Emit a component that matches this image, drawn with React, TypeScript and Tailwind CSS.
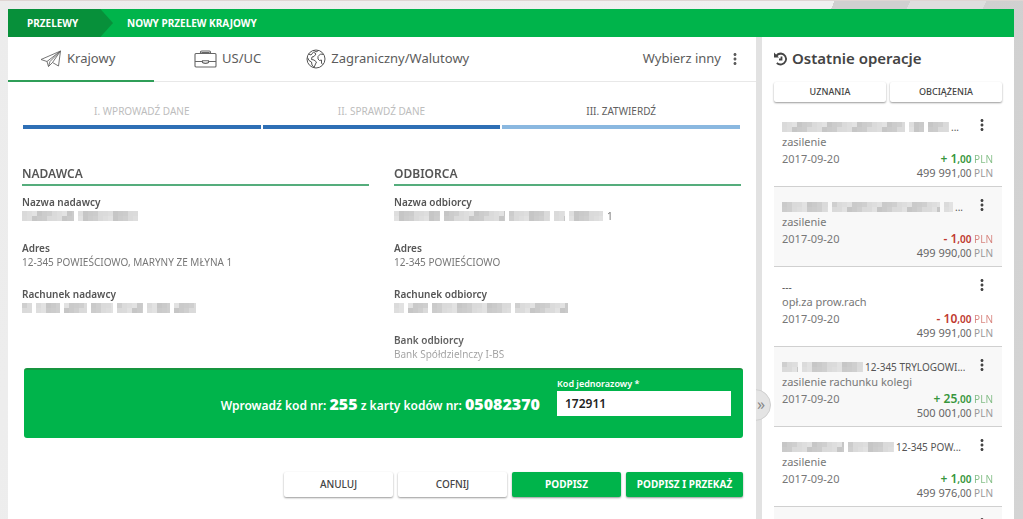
import React from "react";
import { MdMoreVert } from "react-icons/md";

const TONES = ["#dadada", "#cacaca", "#dedede", "#cfcfcf", "#c6c6c6", "#dbdbdb", "#cccccc", "#e2e2e2"];

/* Pixelated cover for private data; every number is the length of one run of blocks. */
function Masked({ runs, seed = 0 }: { runs: number[]; seed?: number }) {
  return (
    <span className="flex shrink-0 gap-1" aria-hidden="true">
      {runs.map((n, r) => (
        <svg key={r} width={n} height="10" viewBox={`0 0 ${n} 10`}>
          {Array.from({ length: Math.ceil(n / 5) * 2 }, (_, i) => (
            <rect
              key={i}
              x={Math.floor(i / 2) * 5}
              y={(i % 2) * 5}
              width="5"
              height="5"
              fill={TONES[(i * 5 + Math.floor(i / 3) * 3 + r * 2 + seed) % TONES.length]}
            />
          ))}
        </svg>
      ))}
    </span>
  );
}

function PlaneIcon() {
  return (
    <svg width="22" height="18" viewBox="0 0 22 18" fill="none" stroke="#666" strokeWidth="0.9" strokeLinejoin="round">
      <path d="M1 9.5 20.5 1 18.5 16 12.5 12.5 8.5 16.5 7 11.5Z" />
      <path d="M7 11.5 20.5 1 12.5 12.5M8.5 16.5 10 11.5 20.5 1" />
    </svg>
  );
}

function CaseIcon() {
  return (
    <svg width="23" height="18" viewBox="0 0 23 18" fill="none" stroke="#666" strokeWidth="1.1">
      <rect x="1" y="3.5" width="21" height="13.5" rx="1" />
      <path d="M6.5 3.5V2.2Q6.5 1 7.7 1H15.3Q16.5 1 16.5 2.2V3.5M8 3.5V2.5H15V3.5M1 11.5H8.5M14.5 11.5H22M8.5 10.8H14.5V12.5Q11.5 14.2 8.5 12.5Z" />
    </svg>
  );
}

function GlobeIcon() {
  return (
    <svg width="20" height="20" viewBox="0 0 20 20" fill="none" stroke="#555" strokeWidth="1" strokeLinejoin="round">
      <circle cx="10" cy="10" r="9" />
      <path d="M2.5 5 5 6 7.5 3 10 5 8 7.5 6 8 5.5 10.5 8 11 10.5 13 9.5 15 8 18.5 6 16 5.5 13 3 11.5 1.5 8.5" />
      <path d="M8 1.5 10 3 12.5 1.5M17.5 5.5 14.5 5 12 7.5 12 10 13.5 11.5 15.5 11 15.5 14 16.5 15.5" />
    </svg>
  );
}

function HistoryIcon() {
  return (
    <svg width="14" height="14" viewBox="0 0 14 14" fill="none" stroke="#444" strokeWidth="1.8">
      <path d="M2 4.5C3.2 2.2 5 1.5 7 1.5A5.5 5.5 0 1 1 2.8 11M7.5 4.5V7.5H5" />
      <path d="M0 .5V5.5H5Z" fill="#444" stroke="none" />
    </svg>
  );
}

function Steps() {
  const steps = [
    { label: "I. WPROWADŹ DANE", style: "border-[#2e6fb5] text-[#bdbdbd]" },
    { label: "II. SPRAWDŹ DANE", style: "border-[#2e6fb5] text-[#bdbdbd]" },
    { label: "III. ZATWIERDŹ", style: "border-[#8ab8e0] text-[#606060]" },
  ];
  return (
    <ol className="mr-4 ml-[15px] mt-[19px] grid grid-cols-3 gap-[2px]">
      {steps.map((s) => (
        <li key={s.label} className={`border-b-4 pb-1 text-center text-[10px] leading-5 ${s.style}`}>
          {s.label}
        </li>
      ))}
    </ol>
  );
}

function Field({ label, children }: { label: string; children: React.ReactNode }) {
  return (
    <div className="mb-[18px] text-[10px] leading-[14px]">
      <dt className="font-semibold text-[#555]">{label}</dt>
      <dd className="flex h-[14px] items-center gap-1 whitespace-nowrap text-[#777]">{children}</dd>
    </div>
  );
}

function Party({ title, children }: { title: string; children: React.ReactNode }) {
  return (
    <section>
      <h2 className="mb-[9px] border-b-2 border-[#55ad7c] text-xs leading-5 font-semibold text-[#555]">{title}</h2>
      <dl>{children}</dl>
    </section>
  );
}

type Operation = {
  runs: number[];
  name: string;
  title: string;
  sign: "+" | "-";
  whole: string;
  balance: string;
};

const operations: Operation[] = [
  { runs: [123, 15, 21], name: "...", title: "zasilenie", sign: "+", whole: "1", balance: "499 991" },
  { runs: [46, 108, 9], name: "...", title: "zasilenie", sign: "-", whole: "1", balance: "499 990" },
  { runs: [], name: "---", title: "opł.za prow.rach", sign: "-", whole: "10", balance: "499 991" },
  { runs: [16, 61], name: "12-345 TRYLOGOWI...", title: "zasilenie rachunku kolegi", sign: "+", whole: "25", balance: "500 001" },
  { runs: [62, 46], name: "12-345 POW...", title: "zasilenie", sign: "+", whole: "1", balance: "499 976" },
];

function MoreButton() {
  return (
    <button type="button" aria-label="Opcje operacji" className="mr-[2px] shrink-0 text-[#444]">
      <MdMoreVert size={18} />
    </button>
  );
}

function OperationRow({ op, index }: { op: Operation; index: number }) {
  return (
    <li className="h-20 border-b border-[#d0d0d0] pr-[9px] pl-2 text-[#777] even:bg-[#f8f8f8]">
      <div className="flex h-[27px] items-end justify-between">
        <div className="flex items-center gap-[2px] overflow-hidden text-[10px] leading-[14px] whitespace-nowrap text-[#555]">
          {op.runs.length > 0 && <Masked runs={op.runs} seed={index} />}
          {op.name}
        </div>
        <MoreButton />
      </div>
      <p className="text-[11px] leading-4">{op.title}</p>
      <div className="flex items-center justify-between text-[11px] leading-[18px]">
        <time dateTime="2017-09-20">2017-09-20</time>
        <span className={op.sign === "+" ? "text-[#37963c]" : "text-[#c0392f]"}>
          <b className="text-xs font-semibold">{op.sign} {op.whole}</b>
          <b className="text-[10px] font-semibold">,00</b>
          <span className="text-[10px] opacity-60"> PLN</span>
        </span>
      </div>
      <p className="text-right text-[11px] leading-[10px] text-[#666]">
        {op.balance}<span className="text-[10px]">,00 <span className="text-[#999]">PLN</span></span>
      </p>
    </li>
  );
}

const raised = "rounded-[2px] bg-white text-[#444] shadow-[0_1px_2px_rgba(0,0,0,0.4)]";
const primary = "rounded-[2px] bg-[#00b44b] font-bold text-white shadow-[0_1px_2px_rgba(0,0,0,0.4)]";

function Recent() {
  return (
    <aside className="relative w-[252px] shrink-0 bg-white px-3">
      <h2 className="flex h-[43px] items-center gap-1 text-[15px] font-semibold text-[#444]">
        <HistoryIcon />
        Ostatnie operacje
      </h2>
      <div className="mt-[2px] grid grid-cols-2 gap-1 text-[9px] font-medium">
        <button type="button" className={`h-5 ${raised}`}>UZNANIA</button>
        <button type="button" className={`h-5 ${raised}`}>OBCIĄŻENIA</button>
      </div>
      <ul className="mt-[5px]">
        {operations.map((op, i) => (
          <OperationRow key={i} op={op} index={i} />
        ))}
        <li className="flex justify-end bg-[#f8f8f8] pt-2 pr-[9px]">
          <MoreButton />
        </li>
      </ul>
      <button
        type="button"
        aria-label="Zwiń panel"
        className="absolute top-[352px] -left-[23px] flex size-8 items-center justify-center rounded-full border border-[#cfcfcf] bg-[#e4e4e4] pb-[3px] pl-3 text-base text-[#888] [clip-path:inset(0_0_0_17px)]"
      >
        »
      </button>
    </aside>
  );
}

function Transfer() {
  const tab = "flex items-center gap-[5px] text-[13px] text-[#5c5c5c]";
  return (
    <main className="flex min-w-0 flex-1 flex-col bg-white">
      <nav className="flex h-[45px] shrink-0 border-b border-[#e8e8e8]">
        <a href="#krajowy" className={`-mb-px w-[146px] border-b-2 border-[#2f9e58] pl-8 ${tab}`}><PlaneIcon />Krajowy</a>
        <a href="#us" className={`ml-10 ${tab}`}><CaseIcon />US/UC</a>
        <a href="#zagraniczny" className={`ml-[45px] ${tab}`}><GlobeIcon />Zagraniczny/Walutowy</a>
        <button type="button" className={`mr-3 ml-auto ${tab}`}>Wybierz inny<MdMoreVert size={18} /></button>
      </nav>
      <Steps />
      <div className="mr-[15px] ml-[14px] mt-[35px] grid h-[204px] shrink-0 grid-cols-2 gap-[25px] overflow-hidden [mask-image:linear-gradient(#000_85%,transparent_110%)]">
        <Party title="NADAWCA">
          <Field label="Nazwa nadawcy"><Masked runs={[52, 60]} /></Field>
          <Field label="Adres">12-345 POWIEŚCIOWO, MARYNY ZE MŁYNA 1</Field>
          <Field label="Rachunek nadawcy"><Masked runs={[10, 24, 23, 22, 26, 23, 22]} seed={3} /></Field>
        </Party>
        <Party title="ODBIORCA">
          <Field label="Nazwa odbiorcy"><Masked runs={[46, 61, 41, 11, 34]} seed={2} />1</Field>
          <Field label="Adres">12-345 POWIEŚCIOWO</Field>
          <Field label="Rachunek odbiorcy"><Masked runs={[10, 20, 79, 53]} seed={5} /></Field>
          <Field label="Bank odbiorcy">Bank Spółdzielnczy I-BS</Field>
        </Party>
      </div>
      <form>
        <div className="mr-[13px] ml-4 flex h-[70px] justify-end rounded-[3px] border-t-2 border-[#16953f] bg-[#00b44b] pr-3 text-white">
          <p className="mt-[22px] mr-[17px] text-xs leading-6 font-semibold">
            Wprowadź kod nr: <b className="text-base">255</b> z karty kodów nr: <b className="text-base">05082370</b>
          </p>
          <div className="mt-[7px] w-[174px]">
            <label htmlFor="code" className="block text-[9px] leading-[14px] font-semibold">Kod jednorazowy *</label>
            <input id="code" type="text" defaultValue="172911" className="block h-[25px] w-full bg-white px-2 text-xs font-semibold text-[#222] outline-none" />
          </div>
        </div>
        <div className="mt-[34px] mr-[13px] flex justify-end gap-[5px] text-[10px] font-medium">
          <button type="button" className={`h-[25px] w-[109px] ${raised}`}>ANULUJ</button>
          <button type="button" className={`h-[25px] w-[109px] ${raised}`}>COFNIJ</button>
          <button type="submit" className={`h-[25px] w-[109px] ${primary}`}>PODPISZ</button>
          <button type="submit" className={`h-[25px] w-[117px] ${primary}`}>PODPISZ I PRZEKAŻ</button>
        </div>
      </form>
    </main>
  );
}

export default function App() {
  return (
    <div className="flex h-screen flex-col overflow-hidden border-t border-[#dfd5d3] bg-[linear-gradient(115deg,#ececec_0%,#f0f0f0_60%,#f0f0f0_66%,#d0d0d0_66%,#d0d0d0_72%,#dedede_72%,#dedede_78%,#d0d0d0_78%,#d4d4d4_100%)] pt-2 pr-[9px] pl-2 font-['Noto_Sans',sans-serif]">
      <header className="flex h-7 shrink-0 items-center bg-[#00b44b] text-[10px] font-bold text-white">
        <a href="#przelewy" className="flex h-full w-[105px] items-center bg-[#07903a] pl-[19px] [clip-path:polygon(0_0,88%_0,100%_50%,88%_100%,0_100%)]">PRZELEWY</a>
        <h1 className="ml-[14px]">NOWY PRZELEW KRAJOWY</h1>
      </header>
      <div className="flex min-h-0 flex-1 gap-[6px] bg-[#e2e2e2]">
        <Transfer />
        <Recent />
      </div>
    </div>
  );
}
